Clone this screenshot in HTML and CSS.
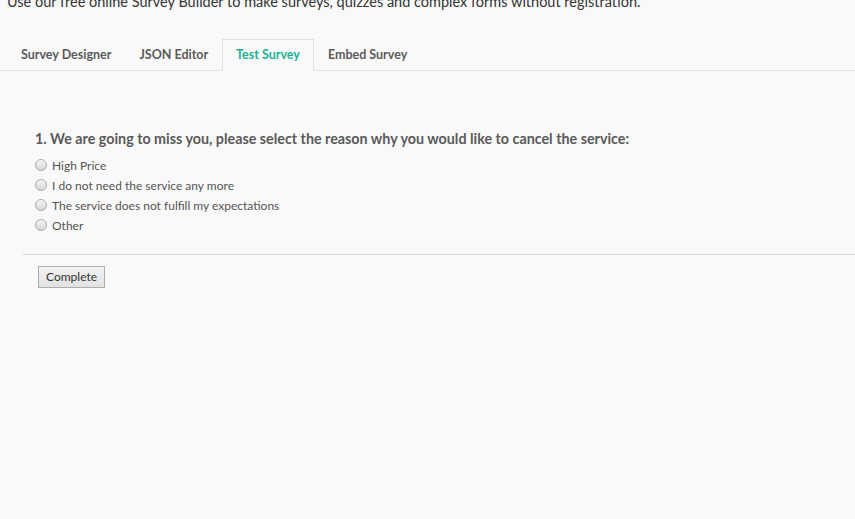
FILE: index.html
```html
<!DOCTYPE html>
<html lang="en">
<head>
    <meta charset="UTF-8">
    <title>Survey Builder</title>
    <link rel="stylesheet" href="styles.css">
</head>
<body>
    <p class="intro">Use our free online Survey Builder to make surveys, quizzes and complex forms without registration.</p>

    <nav class="tabs">
        <a class="tab">Survey Designer</a>
        <a class="tab">JSON Editor</a>
        <a class="tab active">Test Survey</a>
        <a class="tab">Embed Survey</a>
    </nav>

    <section class="survey">
        <div class="question">
            <h3>1. We are going to miss you, please select the reason why you would like to cancel the service:</h3>
            <label class="choice"><input type="radio" name="reason"> High Price</label>
            <label class="choice"><input type="radio" name="reason"> I do not need the service any more</label>
            <label class="choice"><input type="radio" name="reason"> The service does not fulfill my expectations</label>
            <label class="choice"><input type="radio" name="reason"> Other</label>
        </div>
        <div class="footer">
            <button type="button" class="btn">Complete</button>
        </div>
    </section>
</body>
</html>
```

FILE: styles.css
```css
body {
    font-family: 'Lato', sans-serif;
    margin: 0;
    padding: 0;
    background-color: #f9f9f9;
    color: #404040;
}
.intro {
    margin: -8px 0 0 7px;
    font-size: 14.5px;
    line-height: 20px;
    color: #333;
}
.tabs {
    display: flex;
    margin-top: 27px;
    padding-left: 7px;
    border-bottom: 1px solid #e2e2e2;
}
.tab {
    display: block;
    padding: 0 13px;
    height: 30px;
    line-height: 30px;
    font-size: 12.5px;
    font-weight: bold;
    color: #5b5b5b;
    border: 1px solid transparent;
    border-bottom: none;
    margin-bottom: -1px;
}
.tab.active {
    color: #1ab394;
    border-color: #e2e2e2;
    background: #f9f9f9;
    height: 31px;
}
.survey {
    padding: 58px 0 0 23px;
}
.question {
    padding: 0 0 19px 12px;
    border-bottom: 1px solid #d8d8d8;
}
.question h3 {
    margin: 0 0 6px;
    font-size: 14.3px;
    line-height: 20px;
    color: #5a5a5a;
}
.choice {
    display: flex;
    align-items: center;
    gap: 5px;
    height: 20px;
    font-size: 12px;
    color: #555;
}
.choice input {
    appearance: none;
    margin: 0;
    width: 12px;
    height: 12px;
    border-radius: 50%;
    border: 1px solid #aaa;
    background: linear-gradient(#f4f4f4, #d8d8d8);
}
.footer {
    padding: 10px 0 0 15px;
}
.btn {
    font-family: 'Lato', sans-serif;
    font-size: 12px;
    color: #333;
    height: 22px;
    padding: 0 7px;
    border: 1px solid #adadad;
    background: linear-gradient(#f2f2f2, #e2e2e2);
}
```
